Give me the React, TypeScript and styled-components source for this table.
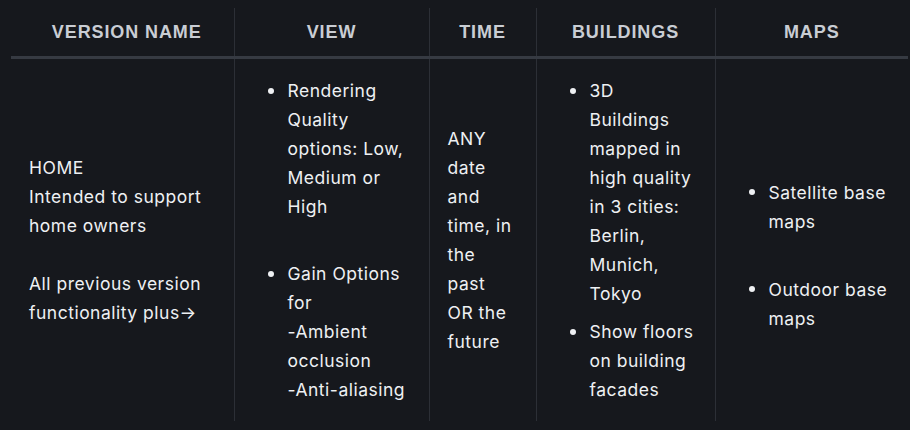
import React from 'react';
import styled, { createGlobalStyle } from 'styled-components';

const GlobalStyle = createGlobalStyle`
  html, body {
    margin: 0;
    padding: 0;
    background: #16181d;
  }
  body {
    font-family: Inter, "Noto Sans", sans-serif;
    color: #eef0f3;
  }
`;

const columns = [
  { key: 'version', label: 'VERSION NAME', width: 223 },
  { key: 'view', label: 'VIEW', width: 195 },
  { key: 'time', label: 'TIME', width: 107 },
  { key: 'buildings', label: 'BUILDINGS', width: 179 },
  { key: 'maps', label: 'MAPS', width: 193 },
];

/**
 * Version comparison table, one row shown
 */
const App: React.FC = () => {
  return (
    <>
      <GlobalStyle />
      <Page>
        <Table>
          <colgroup>
            {columns.map((col) => (
              <col key={col.key} style={{ width: col.width }} />
            ))}
          </colgroup>
          <thead>
            <tr>
              {columns.map((col, i) => (
                <HeadCell key={col.key} $first={i === 0}>
                  {col.label}
                </HeadCell>
              ))}
            </tr>
          </thead>
          <tbody>
            <tr>
              <Cell>
                <Paragraph>
                  HOME
                  <br />
                  Intended to support home owners
                </Paragraph>
                <Paragraph>All previous version functionality plus→</Paragraph>
              </Cell>
              <Cell>
                <BulletList $gap={38}>
                  <Bullet>
                    <Dot />
                    <span>Rendering Quality options: Low, Medium or High</span>
                  </Bullet>
                  <Bullet>
                    <Dot />
                    <span>
                      Gain Options for
                      <br />
                      -Ambient occlusion
                      <br />
                      -Anti-aliasing
                    </span>
                  </Bullet>
                </BulletList>
              </Cell>
              <Cell $padRight={22}>ANY date and time, in the past OR the future</Cell>
              <Cell>
                <BulletList $gap={9}>
                  <Bullet>
                    <Dot />
                    <span>3D Buildings mapped in high quality in 3 cities: Berlin, Munich, Tokyo</span>
                  </Bullet>
                  <Bullet>
                    <Dot />
                    <span>Show floors on building facades</span>
                  </Bullet>
                </BulletList>
              </Cell>
              <Cell>
                <BulletList $gap={39} $offset={30}>
                  <Bullet>
                    <Dot />
                    <span>Satellite base maps</span>
                  </Bullet>
                  <Bullet>
                    <Dot />
                    <span>Outdoor base maps</span>
                  </Bullet>
                </BulletList>
              </Cell>
            </tr>
          </tbody>
        </Table>
      </Page>
    </>
  );
};

// Styled components
const Page = styled.div`
  padding: 8px 2px 0 11px;
  width: 910px;
  height: 430px;
  box-sizing: border-box;
  overflow: hidden;
`;

const Table = styled.table`
  width: 897px;
  table-layout: fixed;
  border-collapse: collapse;
`;

const HeadCell = styled.th<{ $first?: boolean }>`
  height: 48px;
  padding: 0 0 0 ${(p) => (p.$first ? '9px' : '0')};
  font-family: "Liberation Sans", Arial, sans-serif;
  font-weight: 700;
  font-size: 18px;
  letter-spacing: 0.9px;
  color: #c9cdd4;
  text-align: center;
  vertical-align: middle;
  border-bottom: 3px solid #363a42;
  border-left: 1px solid #2c2f36;

  &:first-child {
    border-left: none;
  }
`;

const Cell = styled.td<{ $padRight?: number }>`
  padding: 17px ${(p) => p.$padRight ?? 19}px 17px 18px;
  font-size: 17.5px;
  letter-spacing: 0.5px;
  line-height: 29px;
  color: #eef0f3;
  vertical-align: middle;
  border-left: 1px solid #2c2f36;

  &:first-child {
    border-left: none;
  }
`;

const Paragraph = styled.p`
  margin: 0;

  & + & {
    margin-top: 29px;
  }
`;

const BulletList = styled.ul<{ $gap: number; $offset?: number }>`
  list-style: none;
  margin: 0;
  padding: ${(p) => p.$offset ?? 0}px 0 0 15px;
  display: flex;
  flex-direction: column;
  gap: ${(p) => p.$gap}px;
`;

const Bullet = styled.li`
  display: flex;
  align-items: flex-start;
  gap: 14px;
`;

const Dot = styled.i`
  flex: none;
  width: 6px;
  height: 6px;
  margin-top: 11.5px;
  border-radius: 50%;
  background: #eef0f3;
`;

export default App;
